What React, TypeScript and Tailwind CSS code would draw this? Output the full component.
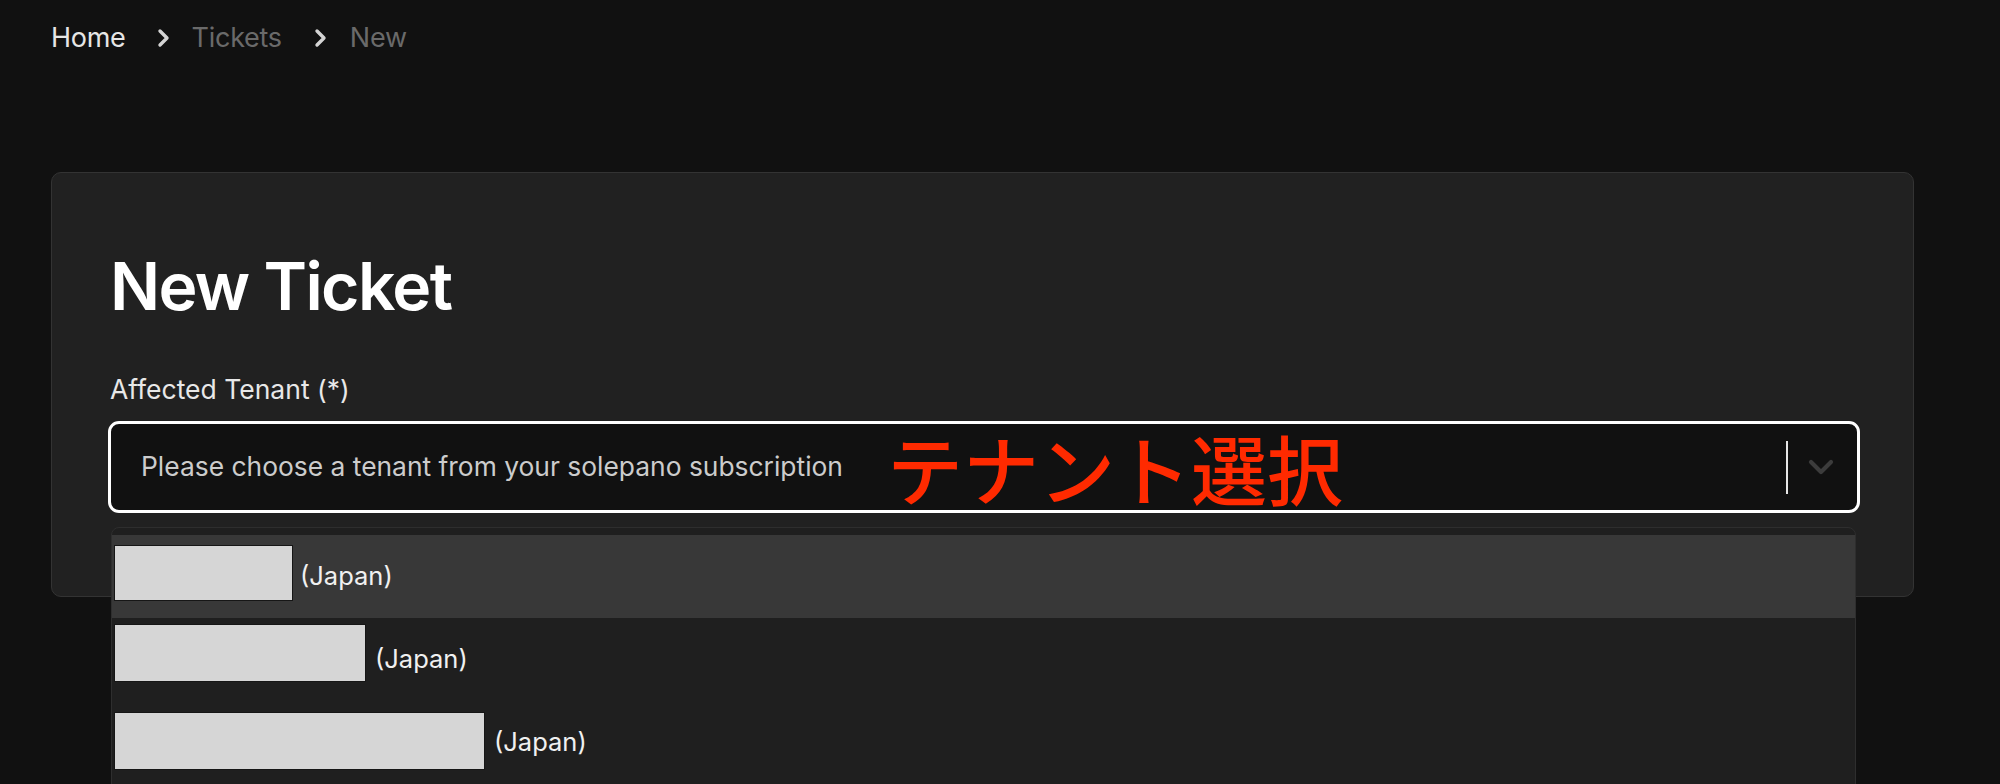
import React from "react";

function BreadChevron() {
  return (
    <svg width="14" height="20" viewBox="0 0 14 20" className="shrink-0">
      <polyline points="4,3 11,10 4,17" fill="none" stroke="#d4d4d4" strokeWidth="3.4" strokeLinecap="round" strokeLinejoin="round" />
    </svg>
  );
}

function SelectChevron() {
  return (
    <svg width="40" height="40" viewBox="0 0 24 24" className="shrink-0">
      <path d="m6 9 6 6 6-6" fill="none" stroke="#3c3c3c" strokeWidth="2.5" strokeLinecap="round" strokeLinejoin="round" />
    </svg>
  );
}

export default function App() {
  const items = [
    { w: 179, h: 56, mt: 10, gap: 7, active: true },
    { w: 252, h: 58, mt: 6, gap: 9, active: false },
    { w: 371, h: 58, mt: 11, gap: 9, active: false },
  ];
  return (
    <div className="relative h-[784px] w-full overflow-hidden bg-[#111111] font-[Inter,sans-serif]">
      <nav className="flex items-center pl-[51px] pt-[22px] text-[27px] leading-[32px] tracking-[-0.01em]">
        <span className="text-[#e6e6e6]">Home</span>
        <span className="ml-[30px] mr-[22px] flex"><BreadChevron /></span>
        <span className="text-[#6a6a6a]">Tickets</span>
        <span className="ml-[31px] mr-[23px] flex"><BreadChevron /></span>
        <span className="text-[#6a6a6a]">New</span>
      </nav>

      <div className="ml-[51px] mt-[118px] w-[1863px] rounded-[10px] border border-[#333333] bg-[#212121] pl-[56px] pr-[53px] pt-[80px] pb-[83px]">
        <h1 className="pl-[2px] text-[66px] font-semibold leading-[66px] tracking-[-0.025em] text-white">New Ticket</h1>
        <label className="mt-[55px] block pl-[2px] text-[26.5px] leading-[30px] text-[#e8e8e8]">Affected Tenant (*)</label>
        <div className="relative mt-[17px]">
          <div className="flex h-[92px] items-center rounded-[11px] border-[3px] border-white bg-[#111111] pl-[30px] pr-[16px]">
            <span className="text-[26.4px] text-[#cccccc]">Please choose a tenant from your solepano subscription</span>
            <span className="ml-[44px] font-['Noto_Sans_CJK_JP',sans-serif] text-[76px] font-medium leading-[76px] text-[#ff2a00]">テナント選択</span>
            <div className="flex-1" />
            <div className="h-[53px] w-[2px] bg-[#e6e6e6]" />
            <div className="ml-[13px] flex">
              <SelectChevron />
            </div>
          </div>
          <div className="absolute left-[3px] right-[4px] top-[106px] h-[300px] rounded-t-[8px] border border-[#2e2e2e] bg-[#1f1f1f] pt-[7px]">
            {items.map((it, i) => (
              <div
                key={i}
                className={`flex h-[83px] items-start pl-[2px] ${it.active ? "bg-[#383838]" : ""}`}
              >
                <div
                  className="border border-[#161616] bg-[#d6d6d6]"
                  style={{ width: it.w, height: it.h, marginTop: it.mt }}
                />
                <span
                  className="self-center text-[25.5px] text-[#f0f0f0]"
                  style={{ marginLeft: it.gap }}
                >
                  (Japan)
                </span>
              </div>
            ))}
          </div>
        </div>
      </div>
    </div>
  );
}
